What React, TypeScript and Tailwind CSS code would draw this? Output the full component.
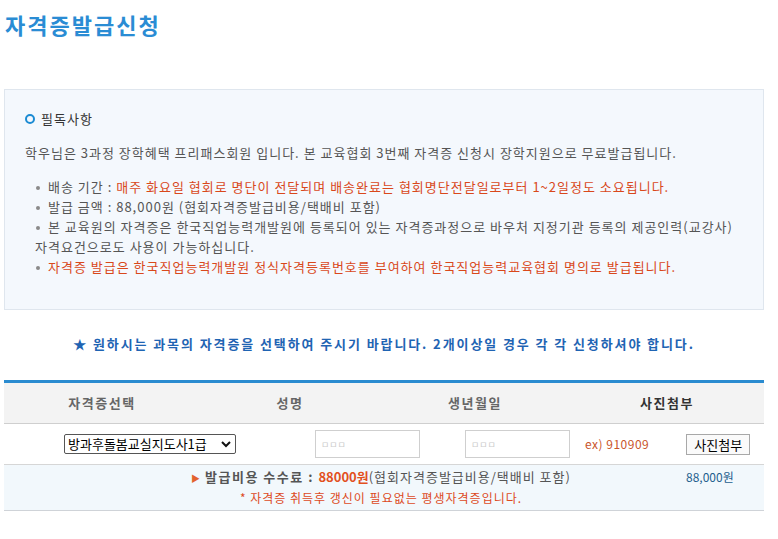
import { useState } from 'react'

const FONT = "font-['Noto_Sans_CJK_KR','Noto_Sans',sans-serif]"

const NOTICES = [
  {
    label: '배송 기간 : ',
    text: '매주 화요일 협회로 명단이 전달되며 배송완료는 협회명단전달일로부터 1~2일정도 소요됩니다.',
    red: true,
  },
  { label: '발급 금액 : 88,000원 (협회자격증발급비용/택배비 포함)', text: '', red: false },
  {
    label:
      '본 교육원의 자격증은 한국직업능력개발원에 등록되어 있는 자격증과정으로 바우처 지정기관 등록의 제공인력(교강사) 자격요건으로도 사용이 가능하십니다.',
    text: '',
    red: false,
  },
  {
    label: '',
    text: '자격증 발급은 한국직업능력개발원 정식자격등록번호를 부여하여 한국직업능력교육협회 명의로 발급됩니다.',
    red: true,
  },
]

function Bullet() {
  return (
    <span className="inline-block w-[13px] align-middle">
      <span className="ml-[1px] block size-[4px] rounded-full bg-[#8a8a8a]" />
    </span>
  )
}

export default function App() {
  const [course, setCourse] = useState('방과후돌봄교실지도사1급')

  return (
    <div className={`${FONT} ml-[4px] w-[760px] bg-white pb-[30px] text-[#555]`}>
      {/* title */}
      <h1 className="mt-[8px] pl-[1px] text-[22px] font-bold leading-[32px] tracking-[2px] text-[#2a8cd4]">
        자격증발급신청
      </h1>

      {/* notice box */}
      <section className="mt-[49px] border border-[#dfe6ee] bg-[#f4f8fd] px-[20px] pb-[32px] pt-[20px] tracking-[1px]">
        <div className="flex items-center gap-[6px] leading-[18px]">
          <span className="size-[10px] rounded-full border-[2.5px] border-[#1b8bd3]" />
          <span className="text-[13px] text-[#333]">필독사항</span>
        </div>
        <p className="mt-[15px] text-[13px] leading-[20px] text-[#555]">
          학우님은 3과정 장학혜택 프리패스회원 입니다. 본 교육협회 3번째 자격증 신청시 장학지원으로 무료발급됩니다.
        </p>
        <ul className="mt-[14px] pl-[10px] text-[13px] leading-[20px]">
          {NOTICES.map((n, i) => (
            <li key={i}>
              <Bullet />
              {n.label}
              {n.text && <span className="text-[#d9481b]">{n.text}</span>}
            </li>
          ))}
        </ul>
      </section>

      {/* guide line */}
      <p className="mt-[24px] text-center text-[13px] font-bold leading-[20px] tracking-[1.9px] text-[#1f64b3]">
        ★ 원하시는 과목의 자격증을 선택하여 주시기 바랍니다. 2개이상일 경우 각 각 신청하셔야 합니다.
      </p>

      {/* form table */}
      <div className="mt-[26px] border-t-[3px] border-[#2a8bd0]">
        <div className="grid h-[41px] grid-cols-[196px_180px_190px_194px] items-center border-b border-[#cfcfcf] bg-[#f3f3f3] text-center text-[13px] font-bold tracking-[1.5px]">
          <span className="text-[#666]">자격증선택</span>
          <span className="text-[#666]">성명</span>
          <span className="text-[#666]">생년월일</span>
          <span className="text-[#333]">사진첨부</span>
        </div>

        <div className="flex h-[41px] items-center border-b border-[#d6d6d6] text-[13px]">
          <div className="flex w-[292px] justify-center">
            <label className="flex h-[20px] w-[172px] items-center justify-between rounded-[2px] border border-[#555] bg-white pl-[3px] pr-[4px] text-black">
              <select
                value={course}
                onChange={(e) => setCourse(e.target.value)}
                className="w-full appearance-none bg-transparent text-[13px] leading-[18px] outline-none"
              >
                <option>방과후돌봄교실지도사1급</option>
                <option>방과후돌봄교실지도사2급</option>
              </select>
              <svg width="10" height="8" viewBox="0 0 10 8" className="shrink-0">
                <path d="M1 2 L5 6 L9 2" fill="none" stroke="#111" strokeWidth="2" />
              </svg>
            </label>
          </div>
          <input
            defaultValue="ㅁㅁㅁ"
            className="ml-[19px] h-[28px] w-[105px] border border-[#cfcfcf] bg-white px-[5px] text-[9px] text-[#cccccc] outline-none"
          />
          <input
            defaultValue="ㅁㅁㅁ"
            className="ml-[45px] h-[28px] w-[105px] border border-[#cfcfcf] bg-white px-[5px] text-[9px] text-[#cccccc] outline-none"
          />
          <span className="ml-[15px] text-[12px] tracking-[0.5px] text-[#c9542a]">ex) 910909</span>
          <button className="ml-[37px] h-[21px] w-[64px] border border-[#a8a8a8] bg-[#fafafa] text-[13px] leading-[19px] text-black">
            사진첨부
          </button>
        </div>

        <div className="flex border-b border-[#cfd3d8] bg-[#f2f8fc] pb-[3px] pt-[2px] leading-[19px] tracking-[1px]">
          <div className="ml-[97px] w-[560px] text-center">
            <p className="text-[13px]">
              <span className="mr-[4px] text-[9px] text-[#e2622e]">▶</span>
              <span className="font-bold tracking-[1.5px] text-[#555]">발급비용 수수료 : </span>
              <span className="font-bold tracking-normal text-[#e2501e]">88000원</span>
              <span className="text-[#555]">(협회자격증발급비용/택배비 포함)</span>
            </p>
            <p className="text-[12px] text-[#dd4a1c]">* 자격증 취득후 갱신이 필요없는 평생자격증입니다.</p>
          </div>
          <span className="ml-[25px] text-[12px] tracking-normal text-[#1e5f8e]">88,000원</span>
        </div>
      </div>
    </div>
  )
}
